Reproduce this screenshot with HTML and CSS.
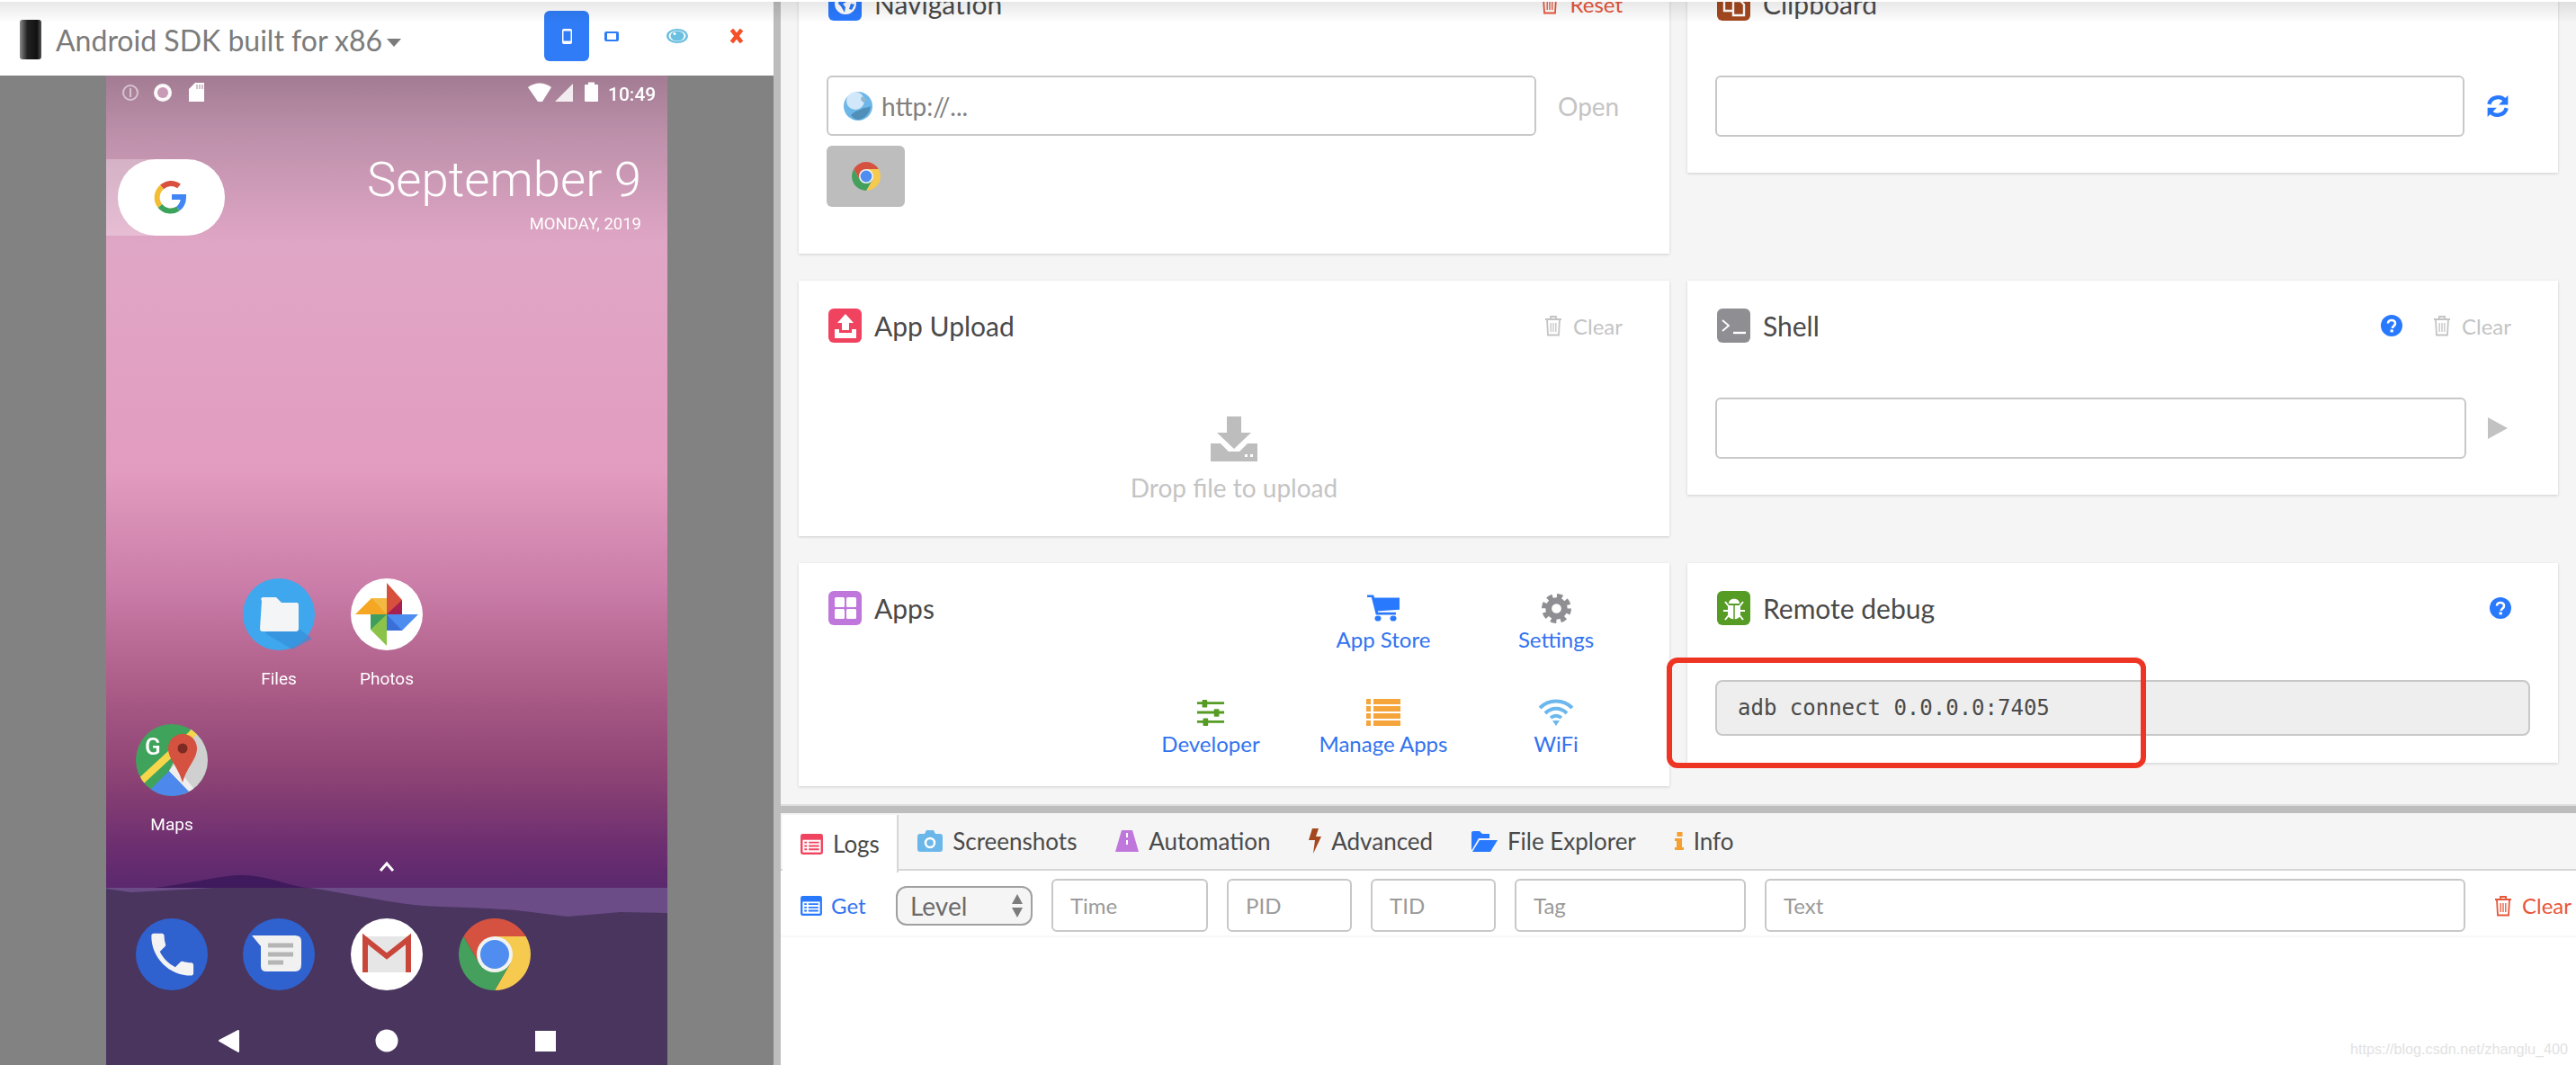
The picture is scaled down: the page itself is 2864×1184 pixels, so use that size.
FILE: index.html
```html
<!DOCTYPE html>
<html lang="en">
<head>
  <meta charset="UTF-8">
  <meta name="viewport" content="width=device-width, initial-scale=1.0">
  <title>Device control</title>
  <link rel="stylesheet" href="styles.css">
</head>
<body>
  <!-- Shared icons -->
  <svg class="sprites" width="0" height="0">
    <symbol id="i-trash" viewBox="0 0 20 24">
      <path d="M1 5h18M7 5V2h6v3M3 5l1 17.5h12L17 5" fill="none" stroke="currentColor" stroke-width="1.8"/>
      <path d="M7.2 9v10M10 9v10M12.8 9v10" fill="none" stroke="currentColor" stroke-width="1.3"/>
    </symbol>
    <symbol id="i-help" viewBox="0 0 24 24">
      <circle cx="12" cy="12" r="12" fill="currentColor"/>
      <path d="M8 9.5C8 7 10 6 12 6s4 1.2 4 3.5c0 3-3.2 3-3.2 5.5" fill="none" stroke="#fff" stroke-width="2.6"/>
      <rect x="10.6" y="16.4" width="3.2" height="3" fill="#fff"/>
    </symbol>
    <symbol id="i-list" viewBox="0 0 26 24">
      <rect width="26" height="24" rx="2.5" fill="currentColor"/>
      <rect x="2.5" y="7" width="21" height="14.5" fill="#fff"/>
      <path d="M4.5 10h3M4.5 14h3M4.5 18h3M9.5 10h12M9.5 14h12M9.5 18h12" stroke="currentColor" stroke-width="2"/>
    </symbol>
    <symbol id="i-chrome" viewBox="4 4 40 40">
      <path d="M41.32 14A20 20 0 0 0 6.68 14L15.34 29 24 14Z" fill="#d4523f"/>
      <path d="M41.32 14A20 20 0 0 1 24 44L32.66 29 24 14Z" fill="#f6c94f"/>
      <path d="M24 44A20 20 0 0 1 6.68 14L15.34 29H32.66Z" fill="#44a05c"/>
      <circle cx="24" cy="24" r="10" fill="#f2f2f2"/>
      <circle cx="24" cy="24" r="8" fill="#4f8ef0"/>
    </symbol>
  </svg>

  <div class="app">
    <aside class="device-pane">
      <header class="device-bar">
        <span class="device-thumb"></span>
        <h1 class="device-name">Android SDK built for x86</h1>
        <span class="device-caret"></span>
        <div class="device-actions">
          <button class="view-btn view-btn-on">
            <svg width="11" height="17" viewBox="0 0 11 17"><rect width="11" height="17" rx="2" fill="#fff"/><rect x="1.5" y="2.500" width="8" height="11" fill="#2f7cf6"/></svg>
          </button>
          <button class="view-btn">
            <svg width="16" height="11" viewBox="0 0 16 11"><rect width="16" height="11" rx="2" fill="#2f7cf6"/><rect x="3" y="2" width="10" height="7" fill="#fff"/></svg>
          </button>
          <button class="view-btn view-eye">
            <svg width="24" height="16" viewBox="0 0 24 16"><ellipse cx="12" cy="8" rx="12" ry="8" fill="#6bbfe0"/><ellipse cx="12" cy="8" rx="9.500" ry="6" fill="#fff"/><ellipse cx="12" cy="8" rx="7.500" ry="5.500" fill="#6bbfe0"/><circle cx="9" cy="5.500" r="1.500" fill="#fff"/></svg>
          </button>
          <button class="view-btn view-close">
            <svg width="16" height="16" viewBox="0 0 16 16"><path d="M2.500 1l11 14M13.500 1l-11 14" stroke="#f4502a" stroke-width="4.500"/></svg>
          </button>
        </div>
      </header>

      <div class="device-stage">
        <svg class="phone" width="624" height="1100" viewBox="118 84 624 1100">
          <defs>
            <linearGradient id="wall" x1="0" y1="0" x2="0" y2="1">
              <stop offset="0" stop-color="#a27c93"/>
              <stop offset="0.06" stop-color="#bd90aa"/>
              <stop offset="0.17" stop-color="#e0a6c5"/>
              <stop offset="0.40" stop-color="#e29cbf"/>
              <stop offset="0.52" stop-color="#c97ca7"/>
              <stop offset="0.62" stop-color="#ab5c87"/>
              <stop offset="0.71" stop-color="#8c4274"/>
              <stop offset="0.78" stop-color="#6c2e70"/>
              <stop offset="0.84" stop-color="#53266d"/>
              <stop offset="1" stop-color="#53266d"/>
            </linearGradient>
            <clipPath id="maps-clip"><circle cx="191" cy="845" r="40"/></clipPath>
          </defs>
          <rect x="118" y="84" width="624" height="1100" fill="url(#wall)"/>
          <path d="M172 987C215 982 245 973 270 973 295 973 315 983 340 987Z" fill="#3f1a5c"/>
          <rect x="118" y="987" width="624" height="197" fill="#4a355f"/>
          <path d="M344 987H742V1015L690 1014 631 1019 574 1012C520 1008 490 1009 460 1006 420 1001 380 992 344 987Z" fill="#6b4c87"/>
          <path d="M240 987H118V988L145 992Z" fill="#6b4c87"/>

          <!-- status bar -->
          <circle cx="145" cy="103" r="8" fill="none" stroke="#e8d8e2" stroke-width="2" opacity=".75"/>
          <rect x="144" y="98" width="2" height="10" fill="#e8d8e2" opacity=".75"/>
          <circle cx="181" cy="103" r="10" fill="#fff" opacity=".95"/>
          <circle cx="181" cy="103" r="6" fill="#c79ab5"/>
          <path d="M213 96L217 92H227V113H210V99Z" fill="#fff"/>
          <path d="M219 94V99M222 94V99M225 94V99" stroke="#a57f96" stroke-width="1"/>
          <path d="M587 97C595 91 605 91 613 97L603 113H598Z" fill="#fff"/>
          <path d="M637 93V113H617Z" fill="#fff" opacity=".85"/>
          <rect x="650" y="94" width="15" height="19" rx="1" fill="#fff"/>
          <rect x="654" y="91.500" width="7" height="3" fill="#fff"/>
          <text class="ph-time" x="676" y="112">10:49</text>

          <!-- search and date -->
          <rect x="118" y="177" width="70" height="85" fill="#fff" opacity=".28"/>
          <rect x="131" y="177" width="119" height="85" rx="42" fill="#fff"/>
          <g fill="none" stroke-width="6">
            <path d="M199 207A14.500 14.500 0 0 0 180 208" stroke="#d9503f"/>
            <path d="M180 208A15 15 0 0 0 178 229" stroke="#f2bd32"/>
            <path d="M178 229A15 15 0 0 0 198 232" stroke="#3da35a"/>
            <path d="M198 232C203 228 204 224 204 219H191" stroke="#4285f4"/>
          </g>
          <text class="ph-date" x="713" y="218" text-anchor="end">September 9</text>
          <text class="ph-day" x="713" y="255" text-anchor="end">MONDAY, 2019</text>

          <!-- files -->
          <circle cx="310" cy="683" r="40" fill="#3fa7ee"/>
          <path d="M298 700H334L347 710 325 722 295 704Z" fill="#358fd8" opacity=".7"/>
          <path d="M291 668Q289 665 292 664H307L313 670H330Q332 670 332 673V699Q332 702 329 702H292Q289 702 289 699Z" fill="#f4f5f6"/>
          <text class="ph-label" x="310" y="761" text-anchor="middle">Files</text>

          <!-- photos -->
          <circle cx="430" cy="683" r="40" fill="#fff"/>
          <path d="M430 648L447 667V683H430Z" fill="#d6503c"/>
          <path d="M430 683H447V667Z" fill="#a8204f"/>
          <path d="M395 683L413 665H430V683Z" fill="#f5a623"/>
          <path d="M413 665H430V683Z" fill="#f3b943"/>
          <path d="M430 718L412 700V683H430Z" fill="#8bc34a"/>
          <path d="M412 683H430L412 700Z" fill="#3f9e5e"/>
          <path d="M465 683L447 701H430V683Z" fill="#4d8df0"/>
          <path d="M430 683V701H447Z" fill="#3b6fd8"/>
          <text class="ph-label" x="430" y="761" text-anchor="middle">Photos</text>

          <!-- maps -->
          <g clip-path="url(#maps-clip)">
            <rect x="151" y="805" width="80" height="80" fill="#3fa35c"/>
            <path d="M215 805H231V885H205L188 857Z" fill="#d0d0d0"/>
            <path d="M160 885L188 857 215 885Z" fill="#4d88ec"/>
            <path d="M188 857L215 885H222L194 850Z" fill="#eee"/>
            <path d="M155 870L220 810" stroke="#f6d64a" stroke-width="8"/>
          </g>
          <path d="M203 816C193 816 187 824 187 832 187 844 198 852 203 870 208 852 219 844 219 832 219 824 213 816 203 816Z" fill="#d4523f"/>
          <circle cx="203" cy="832" r="5.500" fill="#7c2a22"/>
          <text class="ph-g" x="161" y="839">G</text>
          <text class="ph-label" x="191" y="923" text-anchor="middle">Maps</text>

          <path d="M423 968L430 960 437 968" fill="none" stroke="#fff" stroke-width="3"/>

          <!-- dock -->
          <circle cx="191" cy="1061" r="40" fill="#2f62cf"/>
          <path transform="translate(160.500 1030) scale(2.600)" d="M6.620 10.790c1.440 2.830 3.760 5.140 6.590 6.590l2.200-2.200c.27-.27.67-.36 1.020-.24 1.120.37 2.330.57 3.570.57.55 0 1 .45 1 1V20c0 .55-.45 1-1 1-9.390 0-17-7.610-17-17 0-.55.45-1 1-1h3.500c.55 0 1 .45 1 1 0 1.250.2 2.450.57 3.570.11.35.03.74-.25 1.020l-2.200 2.200z" fill="#f3f3f3"/>
          <circle cx="310" cy="1061" r="40" fill="#2f62cf"/>
          <path d="M280 1040H328Q335 1040 335 1046V1072Q335 1080 328 1080H296Q290 1080 290 1074V1052Z" fill="#f1f1f1"/>
          <path d="M298 1051H326M298 1061H326M298 1070H315" stroke="#b5b5b5" stroke-width="5"/>
          <circle cx="430" cy="1061" r="40" fill="#fff"/>
          <rect x="403" y="1041" width="54" height="40" fill="#e6e6e6"/>
          <path d="M406 1081V1044L430 1063 454 1044V1081" fill="none" stroke="#c9473a" stroke-width="6"/>
          <use href="#i-chrome" x="510" y="1021" width="80" height="80"/>

          <!-- nav keys -->
          <path d="M244 1157L265 1146V1169Z" fill="#fff" stroke="#fff" stroke-width="2" stroke-linejoin="round"/>
          <circle cx="430" cy="1157" r="12.500" fill="#fff"/>
          <rect x="595" y="1146" width="23" height="23" fill="#fff"/>
        </svg>
      </div>
    </aside>

    <div class="splitter"></div>

    <main class="main-pane">
      <section class="panels">
        <div class="panel-grid">
          <article class="card card-nav">
            <div class="card-head">
              <span class="badge badge-blue">
                <svg width="26" height="26" viewBox="0 0 26 26"><circle cx="13" cy="13" r="12" fill="#fff"/><path d="M8 4l7 3-2 5-3 1 3 4-1 6-4-7-3-3 1-5zM19 13l4 1-3 6-3-1z" fill="#2979ff"/></svg>
              </span>
              <h2 class="card-title">Navigation</h2>
              <a class="head-link link-red"><svg class="trash"><use href="#i-trash"/></svg>Reset</a>
            </div>
            <div class="field-row nav-row">
              <div class="field field-url">
                <svg class="globe" width="32" height="32" viewBox="0 0 32 32">
                  <circle cx="16" cy="16" r="16" fill="#6db6e8"/>
                  <circle cx="13" cy="10" r="10" fill="#e2f1fb" opacity=".85"/>
                  <path d="M8 26c6-6 10-5 14-8 3 0 6-1 8-2-1 8-7 15-14 15-3 0-6-2-8-5z" fill="#4f8fb8"/>
                  <path d="M20 5l6 4-4 3-3-3z" fill="#8fb7cf"/>
                </svg>
                <input class="url-input" placeholder="http://...">
              </div>
              <a class="open-link">Open</a>
            </div>
            <button class="browser-btn"><svg width="32" height="32"><use href="#i-chrome"/></svg></button>
          </article>

          <article class="card card-clip">
            <div class="card-head">
              <span class="badge badge-brown">
                <svg width="28" height="30" viewBox="0 0 28 30"><path d="M12 23H3V4h10M21 4h4v8" fill="none" stroke="#fff" stroke-width="2.400"/><path d="M13 12h8l4 4v12H13z" fill="none" stroke="#fff" stroke-width="2.400"/><path d="M12 12L19 3" stroke="#fff" stroke-width="2.400"/></svg>
              </span>
              <h2 class="card-title">Clipboard</h2>
            </div>
            <div class="field-row clip-row">
              <input class="field field-wide">
              <svg class="row-icon" width="26" height="26" viewBox="0 0 24 24"><path d="M3 10A9.500 9.500 0 0 1 20 7M21 14A9.500 9.500 0 0 1 4 17" fill="none" stroke="#2979ff" stroke-width="4"/><path d="M22.500 1V10.500H13ZM1.500 23V13.500H11Z" fill="#2979ff"/></svg>
            </div>
          </article>

          <article class="card card-upload">
            <div class="card-head">
              <span class="badge badge-red">
                <svg width="26" height="30" viewBox="0 0 26 30"><path d="M13 2L22 12H17V20H9V12H4Z" fill="#fff"/><path d="M1 19H6V23H20V19H25V29H1Z" fill="#fff"/></svg>
              </span>
              <h2 class="card-title">App Upload</h2>
              <a class="head-link link-grey"><svg class="trash"><use href="#i-trash"/></svg>Clear</a>
            </div>
            <div class="dropzone">
              <svg width="52" height="50" viewBox="0 0 52 50"><path d="M18 0H34V18H45L26 36 7 18H18Z" fill="#bdbdbd"/><path d="M0 30H11L20 39H32L41 30H52V50H0Z" fill="#bdbdbd"/><rect x="38" y="42" width="3" height="3" fill="#fff"/><rect x="44" y="42" width="3" height="3" fill="#fff"/></svg>
              <p class="drop-text">Drop file to upload</p>
            </div>
          </article>

          <article class="card card-shell">
            <div class="card-head">
              <span class="badge badge-grey">
                <svg width="30" height="24" viewBox="0 0 30 24"><path d="M2 6l7 6-7 6" fill="none" stroke="#fff" stroke-width="1.800"/><path d="M14 20H28" stroke="#fff" stroke-width="2.400"/></svg>
              </span>
              <h2 class="card-title">Shell</h2>
              <svg class="help"><use href="#i-help"/></svg>
              <a class="head-link link-grey"><svg class="trash"><use href="#i-trash"/></svg>Clear</a>
            </div>
            <div class="field-row shell-row">
              <input class="field field-wide">
              <svg class="row-icon" width="22" height="24" viewBox="0 0 22 24"><path d="M0 0L22 12 0 24Z" fill="#c2c2c2"/></svg>
            </div>
          </article>

          <article class="card card-apps">
            <div class="card-head">
              <span class="badge badge-purple">
                <svg width="28" height="30" viewBox="0 0 28 30"><rect x="2" y="3" width="11" height="11" rx="1.500" fill="#fff"/><rect x="15" y="3" width="11" height="11" rx="1.500" fill="#fff"/><rect x="2" y="16" width="11" height="11" rx="1.500" fill="#fff"/><rect x="15" y="16" width="11" height="11" rx="1.500" fill="#fff"/></svg>
              </span>
              <h2 class="card-title">Apps</h2>
            </div>
            <div class="app-links">
              <a class="app-link app-link-first">
                <svg width="36" height="30" viewBox="0 0 36 34" preserveAspectRatio="none"><path d="M0 2H6L11 24H32" fill="none" stroke="#2979ff" stroke-width="3"/><path d="M7 4H36V19L10 21Z" fill="#2979ff"/><circle cx="12" cy="30" r="3.500" fill="#2979ff"/><circle cx="29" cy="30" r="3.500" fill="#2979ff"/></svg>
                App Store
              </a>
              <a class="app-link">
                <svg width="33" height="33" viewBox="0 0 34 34"><circle cx="17" cy="17" r="14" fill="none" stroke="#8e8e93" stroke-width="6" stroke-dasharray="6.200 4.800"/><circle cx="17" cy="17" r="9" fill="none" stroke="#8e8e93" stroke-width="7"/></svg>
                Settings
              </a>
              <a class="app-link">
                <svg width="32" height="30" viewBox="0 0 34 32" preserveAspectRatio="none"><path d="M1 5H33M1 16H33M1 27H33" stroke="#559b24" stroke-width="3"/><rect x="7" y="1" width="6" height="9" rx="1" fill="#559b24"/><rect x="21" y="12" width="6" height="9" rx="1" fill="#559b24"/><rect x="8" y="23" width="6" height="9" rx="1" fill="#559b24"/></svg>
                Developer
              </a>
              <a class="app-link">
                <svg width="38" height="30" viewBox="0 0 38 30"><path d="M0 0H5V6H0ZM8 0H38V6H8ZM0 8H5V14H0ZM8 8H38V14H8ZM0 16H5V22H0ZM8 16H38V22H8ZM0 24H5V30H0ZM8 24H38V30H8Z" fill="#f5a53c"/></svg>
                Manage Apps
              </a>
              <a class="app-link">
                <svg width="40" height="30" viewBox="0 0 40 30"><path d="M2 10C12 0 28 0 38 10M8 16C15 9 25 9 32 16M14 21C18 18 22 18 26 21" fill="none" stroke="#6cb8ee" stroke-width="4"/><path d="M16 24H24L20 30Z" fill="#6cb8ee"/></svg>
                WiFi
              </a>
            </div>
          </article>

          <article class="card card-debug">
            <div class="card-head">
              <span class="badge badge-green">
                <svg width="30" height="30" viewBox="0 0 30 30"><path d="M9 10C9 3 21 3 21 10Z" fill="#fff"/><path d="M8 12H22V22C22 29 8 29 8 22Z" fill="#fff"/><path d="M15 12V28" stroke="#559b24" stroke-width="1.500"/><path d="M5 8l4 5M25 8l-4 5M3 18H8M27 18H22M5 28l4-5M25 28l-4-5" stroke="#fff" stroke-width="2"/></svg>
              </span>
              <h2 class="card-title">Remote debug</h2>
              <svg class="help help-end"><use href="#i-help"/></svg>
            </div>
            <div class="field-row debug-row">
              <div class="field field-code">adb connect 0.0.0.0:7405</div>
            </div>
          </article>
        </div>
        <div class="callout"></div>
      </section>

      <section class="console">
        <nav class="tabs">
          <a class="tab tab-on"><svg class="c-red" width="25" height="23"><use href="#i-list"/></svg>Logs</a>
          <a class="tab">
            <svg width="28" height="24" viewBox="0 0 28 24"><path d="M3 4H8L10 0H18L20 4H25Q28 4 28 7V21Q28 24 25 24H3Q0 24 0 21V7Q0 4 3 4Z" fill="#6bb7ea"/><circle cx="14" cy="14" r="5" fill="none" stroke="#fff" stroke-width="2.500"/></svg>Screenshots
          </a>
          <a class="tab">
            <svg width="26" height="24" viewBox="0 0 26 24"><path d="M7 0H19L26 24H0Z" fill="#c077dc"/><path d="M12 3H14V8H12ZM12 11H14V16H12Z" fill="#fff"/></svg>Automation
          </a>
          <a class="tab">
            <svg width="14" height="28" viewBox="0 0 14 28"><path d="M4 0H11L8 9H14L5 28 7 13H0Z" fill="#a4481f"/></svg>Advanced
          </a>
          <a class="tab">
            <svg width="29" height="23" viewBox="0 0 29 23"><path d="M0 21V2Q0 0 2 0H9L12 3H20V8H8L1 20Z" fill="#2979ff"/><path d="M9 10H29L21 23H1Z" fill="#2979ff"/></svg>File Explorer
          </a>
          <a class="tab">
            <svg width="10" height="20" viewBox="0 0 10 20"><rect x="2.500" width="6" height="5" fill="#f5a030"/><path d="M0 7H8V17H10V20H0V17H2V10H0Z" fill="#f5a030"/></svg>Info
          </a>
        </nav>
        <div class="log-tools">
          <a class="get-link"><svg class="c-blue" width="24" height="22"><use href="#i-list"/></svg>Get</a>
          <div class="level-select">Level
            <svg width="14" height="26" viewBox="0 0 14 26"><path d="M7 0L13 11H1ZM7 26L1 15H13Z" fill="#7c7c7c"/></svg>
          </div>
          <input class="filter f-time" placeholder="Time">
          <input class="filter f-id" placeholder="PID">
          <input class="filter f-id" placeholder="TID">
          <input class="filter f-tag" placeholder="Tag">
          <input class="filter f-text" placeholder="Text">
          <a class="clear-link"><svg class="trash"><use href="#i-trash"/></svg>Clear</a>
        </div>
        <div class="log-body"></div>
        <span class="watermark">https://blog.csdn.net/zhanglu_400</span>
      </section>
    </main>
    <div class="top-shade"></div>
  </div>
</body>
</html>
```

FILE: styles.css
```css
* {
  box-sizing: border-box;
}

html, body {
  margin: 0;
  height: 100%;
}

body {
  font-family: Lato, "Open Sans", sans-serif;
  color: #4a4a4a;
  background: #fff;
  overflow: hidden;
}

.sprites {
  position: absolute;
}

.app {
  position: relative;
  display: flex;
  height: 1184px;
}

/* Device side */
.device-pane {
  width: 860px;
  display: flex;
  flex-direction: column;
}

.device-bar {
  height: 84px;
  flex: none;
  display: flex;
  align-items: center;
  padding: 4px 0 0 22px;
  background: #fff;
}

.device-thumb {
  width: 24px;
  height: 44px;
  border-radius: 3px;
  background: linear-gradient(90deg, #8a8a8a, #222 35%, #111 80%, #555);
}

.device-name {
  margin: 0 0 0 16px;
  font-size: 32px;
  font-weight: 400;
  color: #7b7b7b;
  white-space: nowrap;
}

.device-caret {
  margin: 6px 0 0 5px;
  border-left: 8px solid transparent;
  border-right: 8px solid transparent;
  border-top: 9px solid #7b7b7b;
}

.device-actions {
  margin-left: auto;
  display: flex;
  align-items: center;
  margin-top: -8px;
}

.view-btn {
  width: 50px;
  height: 56px;
  display: flex;
  align-items: center;
  justify-content: center;
  padding: 0;
  background: transparent;
  border: 0;
  border-radius: 6px;
}

.view-btn-on {
  background: #2f7cf6;
}

.view-eye {
  margin-left: 23px;
}

.view-close {
  margin: 0 16px;
}

.device-stage {
  flex: 1;
  display: flex;
  justify-content: center;
  background: #828282;
  overflow: hidden;
}

.phone {
  display: block;
  filter: blur(0.7px);
}

.ph-time {
  font: 500 21px Roboto, sans-serif;
  fill: #fff;
}

.ph-date {
  font: 300 54.500px Roboto, sans-serif;
  fill: #fff;
}

.ph-day {
  font: 400 18.500px Roboto, sans-serif;
  fill: #fff;
}

.ph-label {
  font: 400 19px Roboto, sans-serif;
  fill: #fff;
}

.ph-g {
  font: 500 26px Roboto, sans-serif;
  fill: #fff;
}

.splitter {
  width: 8px;
  flex: none;
  background: #bdbdbd;
}

/* Main side */
.main-pane {
  flex: 1;
  min-width: 0;
  display: flex;
  flex-direction: column;
}

.panels {
  position: relative;
  height: 896px;
  flex: none;
  background: #f5f5f5;
  border-bottom: 2px solid #ddd;
  overflow: hidden;
}

.panel-grid {
  display: grid;
  grid-template-columns: 968px 968px;
  grid-template-rows: 328px 284px 248px;
  column-gap: 20px;
  row-gap: 30px;
  align-items: start;
  margin: -46px 0 0 20px;
}

.card {
  background: #fff;
  padding: 31px 52px 0 31px;
  box-shadow: 0 1px 3px rgba(0, 0, 0, 0.16);
}

.card-nav { height: 328px; }
.card-clip { height: 238px; }
.card-upload { height: 284px; }
.card-shell { height: 238px; }
.card-apps { height: 248px; position: relative; }
.card-debug { height: 222px; }

.card-head {
  height: 38px;
  display: flex;
  align-items: center;
  padding-left: 2px;
}

.badge {
  width: 37px;
  height: 38px;
  flex: none;
  display: flex;
  align-items: center;
  justify-content: center;
  border-radius: 6px;
}

.badge-blue { background: #2979ff; }
.badge-brown { background: #a4481f; }
.badge-red { background: #f0435f; }
.badge-grey { background: #8e8e93; }
.badge-purple { background: #c077dc; }
.badge-green { background: #559b24; }

.card-title {
  margin: 0 0 0 14px;
  font-size: 30px;
  font-weight: 400;
  color: #4a4a4a;
}

.head-link {
  margin-left: auto;
  display: flex;
  align-items: center;
  gap: 12px;
  font-size: 24px;
}

.link-red { color: #e8563a; }
.link-grey { color: #c4c4c4; }

.trash {
  width: 20px;
  height: 24px;
}

.help {
  width: 24px;
  height: 24px;
  margin-left: auto;
  color: #2979ff;
}

.help + .head-link {
  margin-left: 34px;
}

.field-row {
  display: flex;
  align-items: center;
  margin-top: 61px;
}

.field {
  border: 2px solid #c8c8c8;
  border-radius: 6px;
  background: #fff;
}

.field-url {
  width: 789px;
  height: 67px;
  flex: none;
  display: flex;
  align-items: center;
  padding-left: 17px;
}

.url-input {
  flex: 1;
  min-width: 0;
  margin-left: 10px;
  border: 0;
  outline: 0;
  padding: 0;
  font: 28px Lato, sans-serif;
  color: #4a4a4a;
}

.url-input::placeholder {
  color: #7f7f7f;
}

.open-link {
  margin-left: 24px;
  font-size: 28px;
  color: #c4c4c4;
}

.browser-btn {
  display: flex;
  align-items: center;
  justify-content: center;
  width: 87px;
  height: 68px;
  margin-top: 11px;
  border: 0;
  border-radius: 6px;
  background: #bdbdbd;
}

.field-wide {
  flex: none;
  height: 68px;
  outline: 0;
}

.clip-row .field-wide { width: 833px; }
.shell-row .field-wide { width: 835px; }

.row-icon {
  margin-left: 24px;
}

.field-code {
  width: 906px;
  height: 62px;
  flex: none;
  display: flex;
  align-items: center;
  padding-left: 23px;
  background: #eee;
  border-radius: 8px;
  font: 24px "DejaVu Sans Mono", monospace;
  color: #4a4a4a;
  white-space: pre;
}

.dropzone {
  display: flex;
  flex-direction: column;
  align-items: center;
  margin: 82px -21px 0 0;
}

.drop-text {
  margin: 12px 0 0;
  font-size: 28px;
  color: #c4c4c4;
}

.app-links {
  position: absolute;
  top: 32px;
  right: 30px;
  display: grid;
  grid-template-columns: repeat(3, 192px);
  grid-auto-rows: 70px;
  row-gap: 46px;
}

.app-link {
  display: grid;
  grid-template-rows: 36px 32px;
  justify-items: center;
  align-items: center;
  font-size: 24px;
  color: #3273f0;
}

.app-link-first {
  grid-column: 2;
}

/* Annotation drawn over the screenshot */
.callout {
  position: absolute;
  left: 985px;
  top: 731px;
  width: 533px;
  height: 123px;
  border: 6px solid #ee3524;
  border-radius: 12px;
}

.top-shade {
  position: absolute;
  top: 0;
  left: 0;
  right: 0;
  height: 26px;
  border-top: 2px solid #fff;
  background: linear-gradient(rgba(0, 0, 0, 0.09), rgba(0, 0, 0, 0));
}

/* Bottom console */
.console {
  position: relative;
  flex: 1;
  min-height: 0;
  display: flex;
  flex-direction: column;
  border-top: 8px solid #bdbdbd;
}

.tabs {
  height: 64px;
  flex: none;
  display: flex;
  align-items: stretch;
  background: #f5f5f5;
  border-bottom: 2px solid #d6d6d6;
  padding-left: 2px;
}

.tab {
  display: flex;
  align-items: center;
  gap: 11px;
  padding: 0 21.400px;
  font-size: 26px;
  color: #4a4a4a;
}

.tab-on {
  height: 64px;
  margin-top: 2px;
  padding: 0 19px 0 20px;
  background: #fff;
  border-right: 2px solid #d6d6d6;
}

.c-red { color: #f0435f; }
.c-blue { color: #2979ff; }

.log-tools {
  height: 74px;
  flex: none;
  display: flex;
  align-items: center;
  padding: 5px 6px 0 22px;
  border-bottom: 2px solid #f8f8f8;
}

.get-link {
  width: 106px;
  flex: none;
  display: flex;
  align-items: center;
  gap: 10px;
  font-size: 24px;
  color: #3273f0;
}

.level-select {
  width: 152px;
  height: 44px;
  flex: none;
  display: flex;
  align-items: center;
  justify-content: space-between;
  padding: 0 8px 0 14px;
  background: #f5f5f5;
  border: 2px solid #a0a0a0;
  border-radius: 12px;
  font-size: 28px;
  color: #6b6b6b;
}

.filter {
  height: 59px;
  flex: none;
  padding: 0 0 0 19px;
  margin-left: 21px;
  border: 2px solid #c8c8c8;
  border-radius: 6px;
  outline: 0;
  font: 24px Lato, sans-serif;
  background: #fff;
}

.filter::placeholder {
  color: #9a9a9a;
}

.f-time { width: 174px; }
.f-id { width: 139px; }
.f-tag { width: 257px; }
.f-text { width: 779px; }

.clear-link {
  margin-left: 32px;
  flex: none;
  display: flex;
  align-items: center;
  gap: 11px;
  font-size: 24px;
  color: #e8563a;
  white-space: nowrap;
}

.log-body {
  flex: 1;
}

.watermark {
  position: absolute;
  right: 9px;
  bottom: 8px;
  font: 16.200px "Liberation Sans", sans-serif;
  color: #e2e2e2;
  white-space: nowrap;
}
```
